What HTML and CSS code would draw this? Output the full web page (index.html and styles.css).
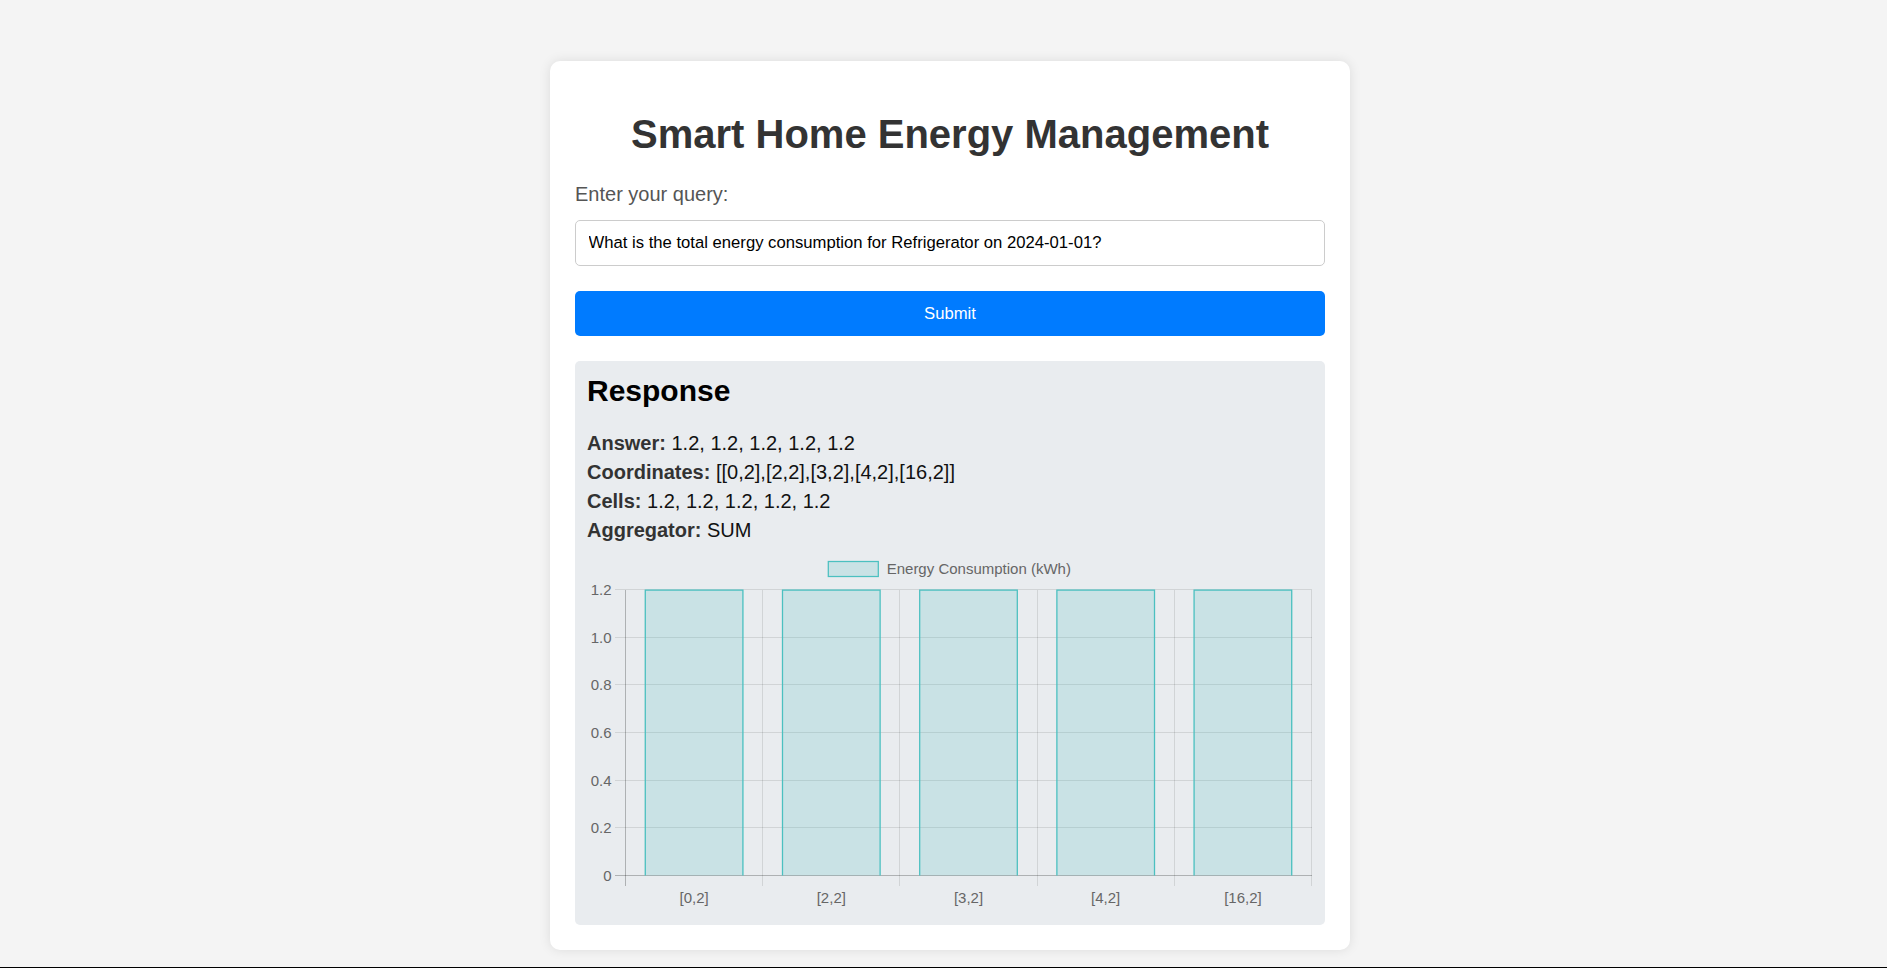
FILE: index.html
```html
<!DOCTYPE html>
<html lang="en">
<head>
<meta charset="utf-8">
<title>Smart Home Energy Management</title>
<link rel="stylesheet" href="styles.css">
</head>
<body>
<div class="card">
  <h1 class="title">Smart Home Energy Management</h1>
  <label class="label" for="q">Enter your query:</label>
  <input class="query" id="q" type="text" value="What is the total energy consumption for Refrigerator on 2024-01-01?">
  <button class="submit" type="button">Submit</button>
  <div class="response">
    <h2 class="resp-title">Response</h2>
    <p class="line"><strong>Answer:</strong> 1.2, 1.2, 1.2, 1.2, 1.2</p>
    <p class="line"><strong>Coordinates:</strong> [[0,2],[2,2],[3,2],[4,2],[16,2]]</p>
    <p class="line"><strong>Cells:</strong> 1.2, 1.2, 1.2, 1.2, 1.2</p>
    <p class="line"><strong>Aggregator:</strong> SUM</p>
    <svg class="chart" width="725" height="362" viewBox="0 0 725 362" xmlns="http://www.w3.org/2000/svg">
      <!-- legend -->
      <rect x="241.3" y="12.5" width="50" height="15" fill="rgba(75,192,192,0.2)" stroke="rgb(75,192,192)" stroke-width="1.25"/>
      <text x="299.7" y="25.4" class="ctext">Energy Consumption (kWh)</text>
      <!-- grid -->
      <g stroke="rgba(0,0,0,0.1)" stroke-width="1" shape-rendering="crispEdges">
        <line x1="28" y1="40.5" x2="724.5" y2="40.5"/>
        <line x1="28" y1="88.2" x2="724.5" y2="88.2"/>
        <line x1="28" y1="135.8" x2="724.5" y2="135.8"/>
        <line x1="28" y1="183.5" x2="724.5" y2="183.5"/>
        <line x1="28" y1="231.2" x2="724.5" y2="231.2"/>
        <line x1="28" y1="278.8" x2="724.5" y2="278.8"/>
        <line x1="175.7" y1="40.5" x2="175.7" y2="336.5"/>
        <line x1="312.9" y1="40.5" x2="312.9" y2="336.5"/>
        <line x1="450.1" y1="40.5" x2="450.1" y2="336.5"/>
        <line x1="587.3" y1="40.5" x2="587.3" y2="336.5"/>
        <line x1="724.5" y1="40.5" x2="724.5" y2="336.5"/>
      </g>
      <g stroke="rgba(0,0,0,0.25)" stroke-width="1" shape-rendering="crispEdges">
        <line x1="28" y1="326.5" x2="724.5" y2="326.5"/>
        <line x1="38.5" y1="40.5" x2="38.5" y2="336.5"/>
      </g>
      <!-- bars -->
      <g fill="rgba(75,192,192,0.2)">
        <rect x="57.7" y="40.5" width="98.8" height="286"/>
        <rect x="194.9" y="40.5" width="98.8" height="286"/>
        <rect x="332.1" y="40.5" width="98.8" height="286"/>
        <rect x="469.3" y="40.5" width="98.8" height="286"/>
        <rect x="606.5" y="40.5" width="98.8" height="286"/>
      </g>
      <g fill="none" stroke="rgb(75,192,192)" stroke-width="1.25">
        <path d="M58.3 326.5 V41.1 H155.9 V326.5"/>
        <path d="M195.5 326.5 V41.1 H293.1 V326.5"/>
        <path d="M332.7 326.5 V41.1 H430.3 V326.5"/>
        <path d="M469.9 326.5 V41.1 H567.5 V326.5"/>
        <path d="M607.1 326.5 V41.1 H704.7 V326.5"/>
      </g>
      <!-- y labels -->
      <g class="ctext" text-anchor="end">
        <text x="24.5" y="45.8">1.2</text>
        <text x="24.5" y="93.5">1.0</text>
        <text x="24.5" y="141.1">0.8</text>
        <text x="24.5" y="188.8">0.6</text>
        <text x="24.5" y="236.5">0.4</text>
        <text x="24.5" y="284.1">0.2</text>
        <text x="24.5" y="331.8">0</text>
      </g>
      <!-- x labels -->
      <g class="ctext" text-anchor="middle">
        <text x="107.1" y="353.8">[0,2]</text>
        <text x="244.3" y="353.8">[2,2]</text>
        <text x="381.5" y="353.8">[3,2]</text>
        <text x="518.7" y="353.8">[4,2]</text>
        <text x="655.9" y="353.8">[16,2]</text>
      </g>
    </svg>
  </div>
</div>
<div class="edge"></div>
</body>
</html>
```
FILE: styles.css
```css
html, body {
  margin: 0;
  padding: 0;
}
body {
  background: #f4f4f4;
  font-family: "Liberation Sans", Arial, sans-serif;
  color: #333;
  padding-left: 13px;
  padding-top: 61px;
  min-height: 968px;
  box-sizing: border-box;
}
.card {
  width: 800px;
  box-sizing: border-box;
  margin: 0 auto;
  padding: 25px;
  background: #fff;
  border-radius: 10px;
  box-shadow: 0 0 12px rgba(0, 0, 0, 0.1);
}
.title {
  font-size: 40px;
  font-weight: bold;
  color: #333;
  text-align: center;
  margin: 25.3px 0 26.2px;
  line-height: 46px;
}
.label {
  display: block;
  font-size: 20px;
  line-height: 23px;
  color: #555;
  margin-bottom: 14px;
}
.query {
  display: block;
  width: 100%;
  height: 46px;
  box-sizing: border-box;
  padding: 0 12.5px;
  border: 1px solid #ccc;
  border-radius: 5px;
  font-family: "Liberation Sans", Arial, sans-serif;
  font-size: 16.67px;
  color: #000;
  background: #fff;
  margin: 0;
}
.submit {
  display: block;
  width: 100%;
  height: 45px;
  margin: 25px 0 0;
  border: none;
  border-radius: 5px;
  background: #007bff;
  color: #fff;
  font-family: "Liberation Sans", Arial, sans-serif;
  font-size: 16.67px;
  padding: 0;
}
.response {
  margin-top: 25px;
  background: #e9ecef;
  border-radius: 5px;
  padding: 12.5px 12.5px 13.7px 12px;
}
.resp-title {
  font-size: 30px;
  font-weight: bold;
  color: #000;
  margin: 0 0 23.5px;
  line-height: 34.5px;
}
.line {
  font-size: 20px;
  line-height: 23px;
  margin: 6px 0;
  color: #111;
}
.line strong {
  color: #333;
}
.chart {
  display: block;
  margin-top: 7px;
}
.ctext, .ctext text {
  font-family: "Liberation Sans", Arial, sans-serif;
  font-size: 15px;
  fill: #666;
}
.edge {
  position: fixed;
  left: 0;
  right: 0;
  bottom: 0;
  height: 1px;
  background: #000;
}
```
